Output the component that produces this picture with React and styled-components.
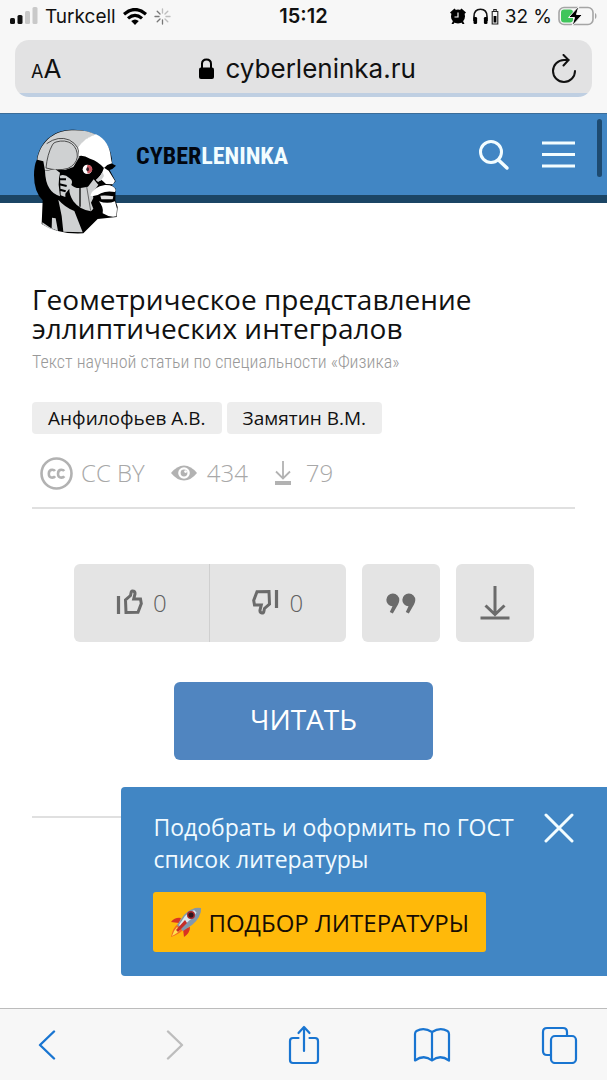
import React from "react";
import styled, { createGlobalStyle } from "styled-components";

const ui = `Inter, "Liberation Sans", sans-serif`;
const site = `"Open Sans", "Noto Sans", sans-serif`;
const narrow = `"Roboto Condensed", "Liberation Sans Narrow", "DejaVu Sans Condensed", sans-serif`;

const GlobalStyle = createGlobalStyle`
  * { box-sizing: border-box; }
  body { margin: 0; background: #fff; font-family: ${site}; color: #111; }
  button { border: 0; padding: 0; margin: 0; background: none; font: inherit; color: inherit; cursor: pointer; }
  a { color: inherit; text-decoration: none; }
  svg { display: block; flex: none; }
`;

const Page = styled.div`
  min-height: 100vh;
  display: flex;
  flex-direction: column;
`;

const BrowserTop = styled.div`
  background: #f7f7f7;
  font-family: ${ui};
  color: #111;
  padding-bottom: 16px;
`;

const StatusBar = styled.div`
  height: 40px;
  padding: 0 10px 8px;
  display: grid;
  grid-template-columns: 1fr auto 1fr;
  align-items: center;
  font-size: 19px;
`;

const StatusGroup = styled.div`
  display: flex;
  align-items: center;
  gap: ${(p) => p.$gap}px;
  justify-content: ${(p) => (p.$end ? "flex-end" : "flex-start")};
`;

const Clock = styled.time`
  font-weight: 600;
  font-size: 20px;
`;

const AddressBar = styled.div`
  height: 57px;
  margin: 0 15px;
  padding: 0 15px 0 16px;
  border-radius: 14px;
  overflow: hidden;
  background: linear-gradient(to top, #bfcfe2 4px, #e2e2e3 4px);
  display: flex;
  align-items: center;
  justify-content: space-between;
`;

const TextSizeButton = styled.button`
  font-size: 18px;
  width: 34px;
  text-align: left;
  white-space: nowrap;
`;

const BigA = styled.span`
  font-size: 26px;
`;

const Address = styled.label`
  display: flex;
  align-items: center;
  gap: 12px;
`;

const AddressInput = styled.input`
  width: 192px;
  border: 0;
  padding: 0;
  outline: 0;
  background: transparent;
  color: #111;
  font: 26px ${ui};
`;

const SiteHeader = styled.header`
  height: 90px;
  padding: 0 32px 0 30px;
  background: #4186c4;
  border-bottom: 8px solid #1b4565;
  border-top: 1px solid #3b6d99;
  display: flex;
  align-items: flex-start;
  position: relative;
`;

const Brand = styled.a`
  display: flex;
  align-items: flex-start;
  gap: 16px;
  height: 81px;
  padding-top: 13px;
`;

const Wordmark = styled.span`
  font-family: ${narrow};
  font-weight: 700;
  font-size: 24px;
  line-height: 58px;
  color: ${(p) => p.$color || "#02060f"};
`;

const HeaderActions = styled.nav`
  height: 81px;
  margin-left: auto;
  display: flex;
  align-items: center;
  gap: 32px;
`;

const ScrollThumb = styled.div`
  position: absolute;
  top: 5px;
  right: 5px;
  width: 5px;
  height: 58px;
  border-radius: 3px;
  background: #1d4a70;
`;

const Main = styled.main`
  position: relative;
  flex: 1;
  padding: 82px 32px 0;
`;

const Title = styled.h1`
  margin: 0;
  font-weight: 400;
  font-size: 28px;
  line-height: 29px;
`;

const Subtitle = styled.p`
  margin: 5px 0 0;
  font-family: ${narrow};
  font-weight: 300;
  font-size: 18px;
  line-height: 28px;
  color: #999;
`;

const Authors = styled.ul`
  list-style: none;
  margin: 26px 0 0;
  padding: 0;
  display: flex;
  gap: 5px;
`;

const Author = styled.a`
  display: block;
  padding: 0 16px;
  border-radius: 4px;
  background: #ededed;
  font-size: 19px;
  line-height: 32px;
`;

const Stats = styled.div`
  display: flex;
  align-items: center;
  height: 34px;
  margin-top: 22px;
  padding-left: 8px;
  gap: 26px;
  font-size: 24px;
  font-weight: 300;
  line-height: 32px;
  color: #a8a8a8;
`;

const Stat = styled.span`
  display: flex;
  align-items: center;
  gap: ${(p) => p.$gap || 10}px;
`;

const Divider = styled.hr`
  margin: ${(p) => p.$top}px 0 0;
  border: 0;
  height: 2px;
  background: #e0e0e0;
`;

const Reactions = styled.div`
  display: flex;
  justify-content: center;
  gap: 16px;
  margin-top: 55px;
`;

const VoteGroup = styled.div`
  display: flex;
  width: 272px;
  border-radius: 6px;
  overflow: hidden;
`;

const ActionButton = styled.button`
  height: 78px;
  width: 78px;
  border-radius: 6px;
  background: #e4e4e4;
  display: flex;
  align-items: center;
  justify-content: center;
`;

const VoteButton = styled(ActionButton)`
  flex: 1;
  border-radius: 0;
  gap: 10px;
  padding-bottom: 2px;
  font-size: 24px;
  font-weight: 300;
  color: #606060;
  & + & { border-left: 1px solid #cfcfcf; }
`;

const ReadButton = styled.button`
  display: block;
  width: 259px;
  height: 78px;
  margin: 40px auto 0;
  padding-bottom: 4px;
  border-radius: 6px;
  background: #5085c0;
  color: #fff;
  font-size: 28px;
`;

const Popup = styled.aside`
  position: absolute;
  right: 0;
  bottom: 32px;
  width: 80%;
  padding: 24px 33px 24px 32px;
  border-radius: 4px 0 0 4px;
  background: #4186c4;
  color: #f0faff;
`;

const PopupHead = styled.div`
  display: flex;
  justify-content: space-between;
  align-items: flex-start;
`;

const PopupText = styled.p`
  margin: 0;
  font-size: 23px;
  line-height: 32px;
`;

const CloseButton = styled.button`
  padding-top: 2px;
`;

const PickButton = styled.button`
  display: flex;
  align-items: center;
  gap: 6px;
  height: 60px;
  margin-top: 17px;
  padding: 0 17px;
  border-radius: 3px;
  background: #ffb90a;
  color: #170d03;
  font-size: 24px;
  white-space: nowrap;
`;

const BrowserBottom = styled.nav`
  height: 72px;
  padding: 0 28px;
  border-top: 1px solid #bcbcbc;
  background: #f7f7f7;
  display: flex;
  align-items: center;
  justify-content: space-between;
`;

const ToolButton = styled.button`
  width: 38px;
  display: flex;
  justify-content: center;
`;

const Signal = () => (
  <svg width="28" height="18" viewBox="0 0 28 18" aria-hidden="true">
    <rect x="0" y="11" width="5" height="6" rx="1.5" fill="#111" />
    <rect x="7.500" y="8" width="5" height="9" rx="1.500" fill="#111" />
    <rect x="15" y="4" width="5" height="13" rx="1.500" fill="#c9c9c9" />
    <rect x="22.500" y="0" width="5" height="17" rx="1.500" fill="#c9c9c9" />
  </svg>
);

const Wifi = () => (
  <svg width="24" height="17" viewBox="0 0 24 17" fill="none" stroke="#000" strokeWidth="3.200" aria-hidden="true">
    <path d="M1 6.200Q12-3.200 23 6.200" />
    <path d="M5 10.400Q12 4.400 19 10.400" />
    <path d="M8.200 13Q12 10 15.800 13L12 17Z" fill="#000" stroke="none" />
  </svg>
);

const Spinner = () => (
  <svg width="17" height="17" viewBox="0 0 17 17" stroke="#777" strokeWidth="1.300" strokeLinecap="round" aria-hidden="true">
    {[0, 45, 90, 135, 180, 225, 270, 315].map((a) => (
      <path key={a} d="M8.500 1V5" transform={`rotate(${a} 8.500 8.500)`} opacity={a > 150 ? 1 : 0.45} />
    ))}
  </svg>
);

const Alarm = () => (
  <svg width="16" height="17" viewBox="0 0 16 17" aria-hidden="true">
    <circle cx="8" cy="8.500" r="7" />
    <path d="M0 4.500 4.500 0.500 6 2 1.500 6ZM16 4.500 11.500 0.500 10 2 14.500 6ZM3 13 1.500 16H3.500L5 14ZM13 13 14.500 16H12.500L11 14Z" />
    <path d="M8 4.500V9H4.500" fill="none" stroke="#f7f7f7" strokeWidth="1.200" />
  </svg>
);

const Headphones = () => (
  <svg width="27" height="17" viewBox="0 0 27 17" aria-hidden="true">
    <path d="M2 13V8.500Q2 1.200 8.500 1.200T15 8.500V13" fill="none" stroke="#111" strokeWidth="1.600" />
    <rect x="1.500" y="9" width="3.600" height="7" rx="1.300" />
    <rect x="11.900" y="9" width="3.600" height="7" rx="1.300" />
    <path d="M20.200 3.500H25.800V16H20.200ZM21.800 3.500V1.500H24.200V3.500" fill="none" stroke="#222" strokeWidth="1.100" />
    <rect x="21.600" y="8" width="2.800" height="6.500" />
  </svg>
);

const Battery = () => (
  <svg width="39" height="20" viewBox="0 0 39 20" aria-hidden="true">
    <rect x="1" y="1.500" width="34" height="17" rx="5" fill="none" stroke="#a5a5a5" strokeWidth="1.600" />
    <rect x="3" y="3.500" width="12" height="13" rx="3" fill="#3fc55b" />
    <path d="M37 7V13Q38.500 12.500 38.500 10T37 7Z" fill="#a5a5a5" />
    <path d="M21 0 10.500 11.500H16.500L14 20 24.500 8.500H18.500Z" fill="#000" stroke="#f7f7f7" strokeWidth="1" />
  </svg>
);

const Lock = () => (
  <svg width="15" height="22" viewBox="0 0 15 22" aria-hidden="true">
    <path d="M3 10V6Q3 1.500 7.500 1.500T12 6V10" fill="none" stroke="#000" strokeWidth="2" />
    <rect x="0" y="9.500" width="15" height="11.500" rx="2" />
  </svg>
);

const Reload = () => (
  <svg width="26" height="30" viewBox="0 0 26 30" fill="none" stroke="#111" strokeWidth="2" strokeLinecap="round" strokeLinejoin="round" aria-hidden="true">
    <path d="M24 17A11 11 0 1 1 13 6H17.500" />
    <path d="M12.500 1 17.500 6 12.500 11.500" />
  </svg>
);

const Head = () => (
  <svg width="90" height="110" viewBox="0 5 270 330" aria-hidden="true">
    <path d="M12 150Q12 120 21 102C28 55 65 14 125 13C190 11 240 45 245 98L247 115L258 121L247 131L239 134L257 168L246 180L257 190L256 225L263 245L260 275L203 281L160 324Q85 328 35 296L38 225Q12 200 12 150Z" fill="#000" />
    <path d="M22 103C29 57 66 16 125 15Q170 13 198 28Q168 36 145 66Q145 78 148 95L130 125L105 134L76 130L45 136L40 108Z" fill="#cfd1d2" />
    <path d="M78 50Q105 42 125 55Q143 70 142 95Q138 118 114 129Q84 138 48 128Q52 86 67 59Q70 52 78 50Z" fill="#cfd1d2" stroke="#333" strokeWidth="2.500" />
    <path d="M50 55Q85 30 118 44Q152 62 148 98" fill="none" stroke="#333" strokeWidth="2.500" />
    <path d="M198 27C226 40 241 66 243 100L246 114L232 119L222 128Q205 108 180 100Q160 88 147 92Q148 78 144 66Q166 36 198 27Z" fill="#fff" />
    <path d="M222 127 236 136 255 167 249 177 228 176 215 164 205 168 198 164Q214 152 222 127Z" fill="#fff" />
    <path d="M198 164Q210 154 218 140L222 152 214 164 204 170Z" fill="#cfd1d2" />
    <path d="M45 137 76 132 90 142Q86 158 86 178L90 213Q70 208 58 189Q46 170 45 137Z" fill="#cfd1d2" />
    <path d="M90 151Q104 145 119 159Q130 165 124 179Q135 190 152 188L174 184 191 162 205 178 188 203 190 218 183 232 190 250 183 258Q150 254 130 228Q117 206 118 190L106 205 106 215 92 210Z" fill="#cfd1d2" />
    <path d="M89 162H108M88 177 110 182M90 193 107 198" stroke="#000" strokeWidth="6" fill="none" />
    <path d="M150 188V244" stroke="#000" strokeWidth="4" fill="none" />
    <path d="M170 184 182 256" stroke="#333" strokeWidth="2" fill="none" />
    <path d="M181 211Q190 184 225 179Q252 178 257 194L255 200Q230 195 213 204Q198 215 181 211Z" fill="#fff" />
    <path d="M211 211Q230 209 250 213L248 222 214 222Z" fill="#e2e2e2" />
    <path d="M207 228Q232 237 255 228L261 250 259 273Q238 277 218 264Q222 247 207 228Z" fill="#fff" />
    <path d="M85 223Q104 245 133 257L158 321 100 319Q97 270 85 223ZM66 277 77 279 84 317 65 309ZM37 291Q60 308 80 318Q55 310 37 297Z" fill="#cfd1d2" />
    <circle cx="172" cy="132" r="14" fill="#fff" />
    <path d="M172 119H178Q187 123 187 132Q186 143 173 145Q168 132 172 119Z" fill="#c95861" />
    <ellipse cx="173" cy="132" rx="4" ry="6" fill="#351f29" />
  </svg>
);

const Search = () => (
  <svg width="32" height="32" viewBox="0 0 32 32" fill="none" stroke="#f3fdff" strokeWidth="3" strokeLinecap="round" aria-hidden="true">
    <circle cx="13" cy="13" r="10.500" />
    <path d="M20.500 21 29 29" strokeWidth="3.500" />
  </svg>
);

const Menu = () => (
  <svg width="33" height="28" viewBox="0 0 33 28" stroke="#f3fdff" strokeWidth="3" aria-hidden="true">
    <path d="M0 2H33M0 13.500H33M0 25H33" />
  </svg>
);

const Cc = () => (
  <svg width="33" height="33" viewBox="0 0 33 33" fill="none" stroke="#b2b2b2" aria-hidden="true">
    <circle cx="16.500" cy="16.500" r="15" strokeWidth="2.600" />
    <path d="M15 14Q14.200 12.800 12.200 12.800Q8.800 12.800 8.800 16.700T12.200 20.600Q14.200 20.600 15.100 19.200M24.200 14Q23.400 12.800 21.400 12.800Q18 12.800 18 16.700T21.400 20.600Q23.400 20.600 24.300 19.200" strokeWidth="2.600" />
  </svg>
);

const Eye = () => (
  <svg width="26" height="16" viewBox="0 0 26 16" fill="#b2b2b2" aria-hidden="true">
    <path d="M0 8Q6 0.500 13 0.500T26 8Q20 15.500 13 15.500T0 8Z" />
    <circle cx="13" cy="8" r="5.800" fill="#fff" />
    <circle cx="13" cy="8" r="3.400" />
    <circle cx="14.600" cy="6.600" r="1.400" fill="#fff" />
  </svg>
);

const SmallDownload = () => (
  <svg width="18" height="26" viewBox="0 0 18 26" fill="none" stroke="#b2b2b2" strokeWidth="1.800" aria-hidden="true">
    <path d="M9 1V18M2 11.500 9 18.500 16 11.500" />
    <path d="M1 23H17" strokeWidth="4" />
  </svg>
);

const Thumb = ({ down }) => (
  <svg width="27" height="28" viewBox="0 0 27 28" fill="none" stroke="#6b6b6b" strokeWidth="3" aria-hidden="true">
    <g transform={down ? "rotate(180 13.500 14)" : undefined}>
      <path d="M2.500 8V26" strokeWidth="3.200" />
      <path d="M10 24.500 9.500 12 14.500 7.500 15.300 3.800Q15.600 2.600 17 3Q19.300 3.500 19 6L17.700 11H24.500L25.300 15.500 22 24.200Z" />
    </g>
  </svg>
);

const Quote = () => (
  <svg width="30" height="21" viewBox="0 0 30 21" fill="#6b6b6b" aria-hidden="true">
    <path d="M7 0.500A6.500 6.500 0 0 1 13.300 7Q13.300 9 12 11.500L6.800 20.500 3.800 19 6.500 13.300A6.400 6.400 0 1 1 7 0.500Z" />
    <path d="M23 0.500A6.500 6.500 0 0 1 29.300 7Q29.300 9 28 11.500L22.800 20.500 19.800 19 22.500 13.300A6.400 6.400 0 1 1 23 0.500Z" />
  </svg>
);

const Download = () => (
  <svg width="30" height="34" viewBox="0 0 30 34" fill="none" stroke="#6b6b6b" strokeWidth="3" aria-hidden="true">
    <path d="M15 0V28M5.500 19.500 15 28.500 24.500 19.500M0.500 32H29.500" />
  </svg>
);

const Close = () => (
  <svg width="30" height="30" viewBox="0 0 30 30" stroke="#f3fdff" strokeWidth="3" strokeLinecap="round" aria-hidden="true">
    <path d="M2 2 28 28M28 2 2 28" />
  </svg>
);

const Rocket = () => (
  <svg width="32" height="31" viewBox="0 0 32 31" aria-hidden="true">
    <path d="M11 11Q5 10 1 15L9 16ZM20 20Q20 26 14 30L13 22Z" fill="#d93322" />
    <path d="M8 17Q3 20 1 30Q9 27 13 23Z" fill="#f36b20" />
    <path d="M7 20Q4 23 2 29Q8 26 10 23Z" fill="#ffe052" />
    <path d="M31 1Q21 0 14 8L7 18 13 24 22 18Q31 11 31 1Z" fill="#8198ae" />
    <path d="M29 2Q21 3 15 9L9 18 11 20Q23 12 29 2Z" fill="#dce7ef" />
    <path d="M31 1Q26 0 23 2L29 8Q31 5 31 1Z" fill="#8797a6" />
    <circle cx="21" cy="8" r="3.300" fill="#2d1720" stroke="#aa292b" strokeWidth="1.400" />
    <path d="M15 13 6 23 8 25 17 16Z" fill="#c52d27" />
  </svg>
);

const Chevron = ({ right }) => (
  <svg width="18" height="30" viewBox="0 0 18 30" fill="none" stroke={right ? "#bdbdbd" : "#1975d1"} strokeWidth="2.400" strokeLinecap="round" strokeLinejoin="round" aria-hidden="true">
    <path d={right ? "M2 1.500 16 15 2 28.500" : "M16 1.500 2 15 16 28.500"} />
  </svg>
);

const blue = { fill: "none", stroke: "#1975d1", strokeWidth: 2.2, strokeLinecap: "round", strokeLinejoin: "round", "aria-hidden": true };

const Share = () => (
  <svg width="32" height="40" viewBox="0 0 32 40" {...blue}>
    <path d="M10.500 13H5Q2 13 2 16V35Q2 38 5 38H27Q30 38 30 35V16Q30 13 27 13H21.500M16 26V2M10.500 8 16 2 21.500 8" />
  </svg>
);

const Book = () => (
  <svg width="38" height="34" viewBox="0 0 38 34" {...blue}>
    <path d="M19 4Q11-1 3.500 3Q2 4 2 6V32.500Q11 26 19 32.500Q27 26 36 32.500V6Q36 4 34.500 3Q27-1 19 4ZM19 4V32" />
  </svg>
);

const Tabs = () => (
  <svg width="38" height="38" viewBox="0 0 38 38" {...blue}>
    <path d="M10 29H6Q2 29 2 25V6Q2 2 6 2H22Q26 2 26 6V9" />
    <rect x="10" y="10" width="25" height="27" rx="4" />
  </svg>
);

export default function App() {
  return (
    <Page>
      <GlobalStyle />
      <BrowserTop>
        <StatusBar>
          <StatusGroup $gap={7}>
            <Signal />
            <span>Turkcell</span>
            <Wifi />
            <Spinner />
          </StatusGroup>
          <Clock>15:12</Clock>
          <StatusGroup $gap={6} $end>
            <Alarm />
            <Headphones />
            <span>32 %</span>
            <Battery />
          </StatusGroup>
        </StatusBar>
        <AddressBar>
          <TextSizeButton aria-label="Размер текста">A<BigA>A</BigA></TextSizeButton>
          <Address>
            <Lock />
            <AddressInput aria-label="Адрес" type="text" defaultValue="cyberleninka.ru" />
          </Address>
          <button aria-label="Обновить"><Reload /></button>
        </AddressBar>
      </BrowserTop>
      <SiteHeader>
        <Brand href="#" aria-label="Cyberleninka">
          <Head />
          <Wordmark>CYBER<Wordmark as="span" $color="#f3fdff">LENINKA</Wordmark></Wordmark>
        </Brand>
        <HeaderActions>
          <button aria-label="Поиск"><Search /></button>
          <button aria-label="Меню"><Menu /></button>
        </HeaderActions>
        <ScrollThumb />
      </SiteHeader>
      <Main>
        <Title>Геометрическое представление эллиптических интегралов</Title>
        <Subtitle>Текст научной статьи по специальности «Физика»</Subtitle>
        <Authors>
          <li><Author href="#">Анфилофьев А.В.</Author></li>
          <li><Author href="#">Замятин В.М.</Author></li>
        </Authors>
        <Stats>
          <Stat $gap={8}><Cc />CC BY</Stat>
          <Stat><Eye />434</Stat>
          <Stat $gap={14}><SmallDownload />79</Stat>
        </Stats>
        <Divider $top={17} />
        <Reactions>
          <VoteGroup>
            <VoteButton aria-label="Нравится"><Thumb />0</VoteButton>
            <VoteButton aria-label="Не нравится"><Thumb down />0</VoteButton>
          </VoteGroup>
          <ActionButton aria-label="Цитировать"><Quote /></ActionButton>
          <ActionButton aria-label="Скачать"><Download /></ActionButton>
        </Reactions>
        <ReadButton>ЧИТАТЬ</ReadButton>
        <Divider $top={56} />
        <Popup>
          <PopupHead>
            <PopupText>Подобрать и оформить по ГОСТ<br />список литературы</PopupText>
            <CloseButton aria-label="Закрыть"><Close /></CloseButton>
          </PopupHead>
          <PickButton><Rocket />ПОДБОР ЛИТЕРАТУРЫ</PickButton>
        </Popup>
      </Main>
      <BrowserBottom>
        <ToolButton aria-label="Назад"><Chevron /></ToolButton>
        <ToolButton aria-label="Вперёд" disabled><Chevron right /></ToolButton>
        <ToolButton aria-label="Поделиться"><Share /></ToolButton>
        <ToolButton aria-label="Закладки"><Book /></ToolButton>
        <ToolButton aria-label="Вкладки"><Tabs /></ToolButton>
      </BrowserBottom>
    </Page>
  );
}
